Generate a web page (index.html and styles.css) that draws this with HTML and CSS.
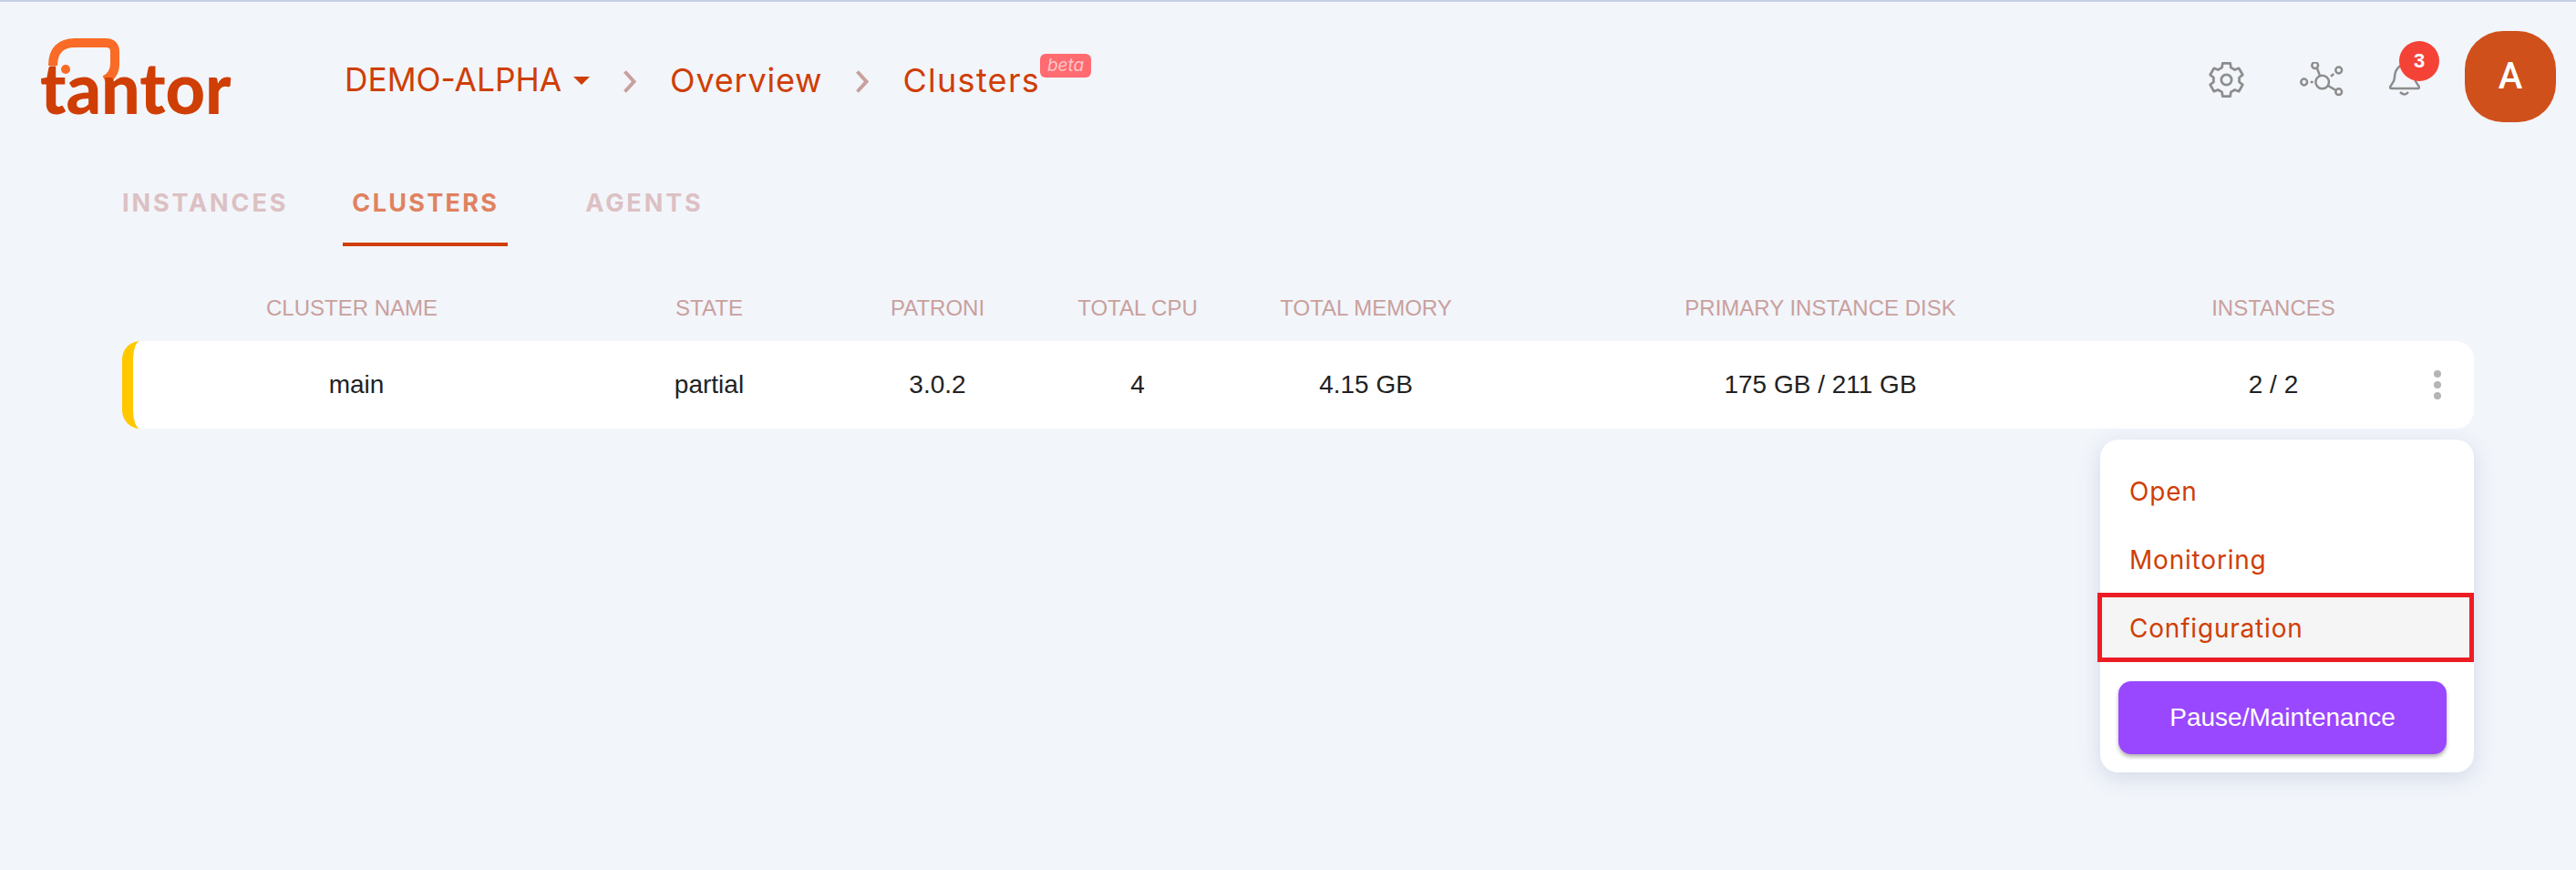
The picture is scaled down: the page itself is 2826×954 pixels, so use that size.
FILE: index.html
```html
<!DOCTYPE html>
<html lang="en">
<head>
  <meta charset="UTF-8">
  <title>Clusters</title>
  <link rel="stylesheet" href="styles.css">
</head>
<body>
  <header class="topbar">
    <svg class="logo" viewBox="0 0 260 130" width="260" height="130">
      <path d="M38 52 C38 35 47 27 62 27 L96 27 Q106 27 106 37 L106 50 Q106 62 95 68" fill="none" stroke="#f96b26" stroke-width="10"/>
      <circle cx="52" cy="56" r="5" fill="#f96b26"/>
      <text transform="translate(24 105) scale(0.967 1)" class="logo-text">tantor</text>
    </svg>
    <nav class="crumbs">
      <span class="crumb crumb-env">DEMO-ALPHA</span>
      <span class="caret"></span>
      <svg class="chevron" viewBox="0 0 16 25" width="16" height="25"><path d="M2.500 1.500 L12.500 12.500 L2.500 23.500" fill="none" stroke="#c9a09d" stroke-width="4"/></svg>
      <span class="crumb">Overview</span>
      <svg class="chevron" viewBox="0 0 16 25" width="16" height="25"><path d="M2.500 1.500 L12.500 12.500 L2.500 23.500" fill="none" stroke="#c9a09d" stroke-width="4"/></svg>
      <span class="crumb crumb-last">Clusters<span class="beta">beta</span></span>
    </nav>
    <div class="actions">
      <svg class="icon icon-gear" viewBox="0 0 24 24" width="47" height="47" fill="none" stroke="#8d8d8d" stroke-width="1.4" stroke-linejoin="round">
        <path d="M9.5 5.14 L9.86 2.74 L14.14 2.74 L14.5 5.14 L16.69 6.4 L18.95 5.52 L21.09 9.22 L19.19 10.73 L19.19 13.26 L21.09 14.78 L18.95 18.48 L16.69 17.59 L14.5 18.86 L14.14 21.26 L9.86 21.26 L9.5 18.86 L7.31 17.6 L5.05 18.48 L2.91 14.78 L4.81 13.27 L4.81 10.74 L2.91 9.22 L5.05 5.52 L7.31 6.41 Z"/>
        <circle cx="12" cy="12" r="2.9"/>
      </svg>
      <svg class="icon icon-net" viewBox="0 0 48 38" width="48" height="38" fill="none" stroke="#8d8d8d" stroke-width="2.5">
        <circle cx="24.700" cy="22" r="7.300"/>
        <circle cx="16.700" cy="3.700" r="3.400"/>
        <circle cx="42.700" cy="9" r="3.400"/>
        <circle cx="4.700" cy="22" r="3.400"/>
        <circle cx="42.700" cy="32.700" r="3.400"/>
        <path d="M19 7 L22 15 M34 15.700 L37.300 13 M11.700 22 L14.700 22 M31 26 L39 30.700"/>
      </svg>
      <div class="bell">
        <svg viewBox="0 0 34 36" width="34" height="36" fill="none" stroke="#8d8d8d" stroke-width="2.500">
          <path d="M6 16 C6 8 11 2 17 2 C23 2 28 8 28 16 C28 22 33 24 33 27 Q33 28 31 28 L3 28 Q1 28 1 27 C1 24 6 22 6 16 Z"/>
          <path d="M12 32 Q17 37 21 32"/>
        </svg>
        <span class="badge">3</span>
      </div>
      <div class="avatar">A</div>
    </div>
  </header>

  <div class="tabs">
    <a class="tab">INSTANCES</a>
    <a class="tab tab-active">CLUSTERS</a>
    <a class="tab">AGENTS</a>
  </div>

  <main class="content">
    <div class="grid grid-head">
      <div>CLUSTER NAME</div>
      <div>STATE</div>
      <div>PATRONI</div>
      <div>TOTAL CPU</div>
      <div>TOTAL MEMORY</div>
      <div>PRIMARY INSTANCE DISK</div>
      <div>INSTANCES</div>
      <div></div>
    </div>
    <div class="grid grid-row">
      <div class="cell-name">main</div>
      <div>partial</div>
      <div>3.0.2</div>
      <div>4</div>
      <div>4.15 GB</div>
      <div>175 GB / 211 GB</div>
      <div>2 / 2</div>
      <div class="kebab"><i></i><i></i><i></i></div>
    </div>

    <div class="menu">
      <a class="menu-item">Open</a>
      <a class="menu-item">Monitoring</a>
      <a class="menu-item menu-item-hover">Configuration</a>
      <button class="btn-pause">Pause/Maintenance</button>
    </div>
  </main>
</body>
</html>
```

FILE: styles.css
```css
body {
  margin: 0;
  height: 954px;
  overflow: hidden;
  background-color: #f2f5fa;
  border-top: 2px solid #c5d0e6;
  box-sizing: border-box;
  font-family: 'Liberation Sans', Arial, sans-serif;
}
/* Top bar */
.topbar {
  display: flex;
  align-items: center;
  height: 100px;
  padding: 32px 22px 0 0;
}
.logo {
  margin: 2px 0 0 20px;
  flex: none;
}
.logo-text {
  font-family: 'Lato', sans-serif;
  font-weight: 900;
  font-size: 78px;
  fill: #cf3e05;
}
.crumbs {
  display: flex;
  align-items: center;
  margin: 8px 0 0 98px;
  color: #cf3e05;
  font-family: 'Inter', sans-serif;
  font-size: 36px;
  line-height: 44px;
  letter-spacing: 0.8px;
}
.crumb-env {
  font-size: 35.3px;
  letter-spacing: 0;
}
.crumb-last {
  position: relative;
  letter-spacing: 1.3px;
}
.caret {
  width: 0;
  height: 0;
  margin-left: 13px;
  border-left: 9px solid transparent;
  border-right: 9px solid transparent;
  border-top: 9px solid #cf3e05;
}
.chevron {
  margin: 2px 36px 0;
}
.beta {
  position: absolute;
  left: 100%;
  top: -7px;
  width: 56px;
  height: 26px;
  line-height: 25px;
  border-radius: 6px;
  background-color: #ff6b70;
  color: #ffc6c8;
  text-align: center;
  font-size: 19px;
  font-style: italic;
  letter-spacing: 0;
}
.actions {
  display: flex;
  align-items: center;
  margin-left: auto;
}
.icon {
  margin-top: 6px;
}
.icon-gear {
  margin-right: 57px;
}
.icon-net {
  margin-right: 50px;
}
.bell {
  position: relative;
  display: flex;
  margin: 6px 49px 0 0;
}
.badge {
  position: absolute;
  top: -24px;
  right: -21px;
  width: 44px;
  height: 44px;
  line-height: 44px;
  border-radius: 50%;
  background-color: #f44336;
  color: #fff;
  text-align: center;
  font-size: 22px;
  font-weight: 700;
}
.avatar {
  width: 100px;
  height: 100px;
  line-height: 100px;
  border-radius: 42px;
  background-color: #cf501b;
  color: #fff;
  text-align: center;
  font-family: 'Roboto', sans-serif;
  font-size: 40px;
  font-weight: 500;
}
/* Tabs */
.tabs {
  display: flex;
  margin-left: 134px;
  height: 136px;
  font-family: 'Inter', sans-serif;
  font-size: 27px;
  font-weight: 700;
  letter-spacing: 2.9px;
}
.tab {
  display: block;
  height: 132px;
  line-height: 178px;
  margin-right: 60px;
  color: #dcc0c3;
}
.tab-active {
  color: #e0825f;
  border-bottom: 4px solid #cf3e05;
  padding: 0 10px;
  letter-spacing: 2.3px;
  margin-right: 85px;
}
/* Table */
.content {
  position: relative;
  margin: 0 112px 0 134px;
}
.grid {
  display: grid;
  grid-template-columns: 480px 304px 197px 242px 259px 738px 256px 1fr;
  align-items: center;
  text-align: center;
  border-left: 12px solid transparent;
}
.grid-head {
  box-sizing: border-box;
  height: 104px;
  padding-top: 32px;
  color: #c9a09d;
  font-size: 24px;
}
.grid-row {
  height: 96px;
  border-left-color: #ffc800;
  border-radius: 20px;
  background-color: #fff;
  color: #222;
  font-size: 28px;
}
.cell-name {
  padding-left: 10px;
}
.kebab {
  display: flex;
  flex-direction: column;
  align-items: center;
  gap: 4px;
  padding-left: 12px;
}
.kebab i {
  width: 8px;
  height: 8px;
  border-radius: 50%;
  background-color: #b5b5b5;
}
/* Row menu */
.menu {
  position: absolute;
  top: 212px;
  right: 0;
  box-sizing: border-box;
  width: 410px;
  height: 365px;
  padding-top: 20px;
  border-radius: 20px;
  background-color: #fff;
  box-shadow: 0 6px 24px rgba(90, 110, 160, 0.2);
}
.menu-item {
  display: block;
  height: 75px;
  line-height: 75px;
  padding-left: 32px;
  color: #cf3e05;
  font-family: 'Inter', sans-serif;
  font-size: 28px;
  letter-spacing: 0.8px;
}
.menu-item-hover {
  background-color: #f5f5f5;
  line-height: 68px;
  height: 66px;
  margin: -2px 0 0 -3px;
  padding-left: 30px;
  border: 5px solid #ed1c24;
}
.btn-pause {
  display: block;
  width: 360px;
  height: 80px;
  margin: 21px 0 0 20px;
  border: none;
  border-radius: 14px;
  background-color: #9a48ff;
  color: #fff;
  font-family: 'Liberation Sans', Arial, sans-serif;
  font-size: 28px;
  box-shadow: 0 3px 4px rgba(0, 0, 0, 0.3);
}
```
